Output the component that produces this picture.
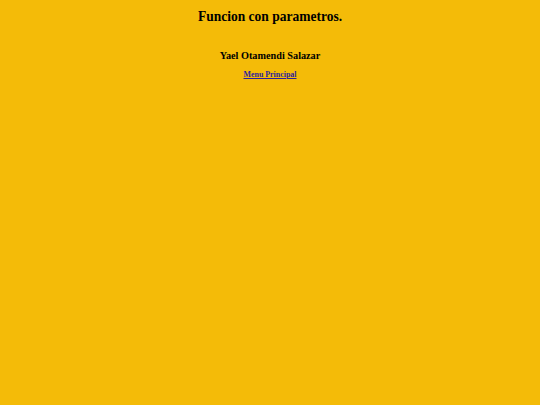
export default function App() {
  return (
    <div className="min-h-[405px] bg-[#f4bb08] text-black text-center" style={{ fontFamily: '"Liberation Serif", serif' }}>
      <h1 className="pt-[8px] text-[15px] font-bold leading-[16px] scale-x-90">Funcion con parametros.</h1>
      <h3 className="mt-[25px] text-[11px] font-bold leading-[12px] scale-x-[0.93]">Yael Otamendi Salazar</h3>
      <p className="mt-[8px] text-[9px] font-bold leading-[10px] scale-x-[0.88]">
        <a href="#" className="text-[#2e1f9c] underline">Menu Principal</a>
      </p>
    </div>
  );
}
